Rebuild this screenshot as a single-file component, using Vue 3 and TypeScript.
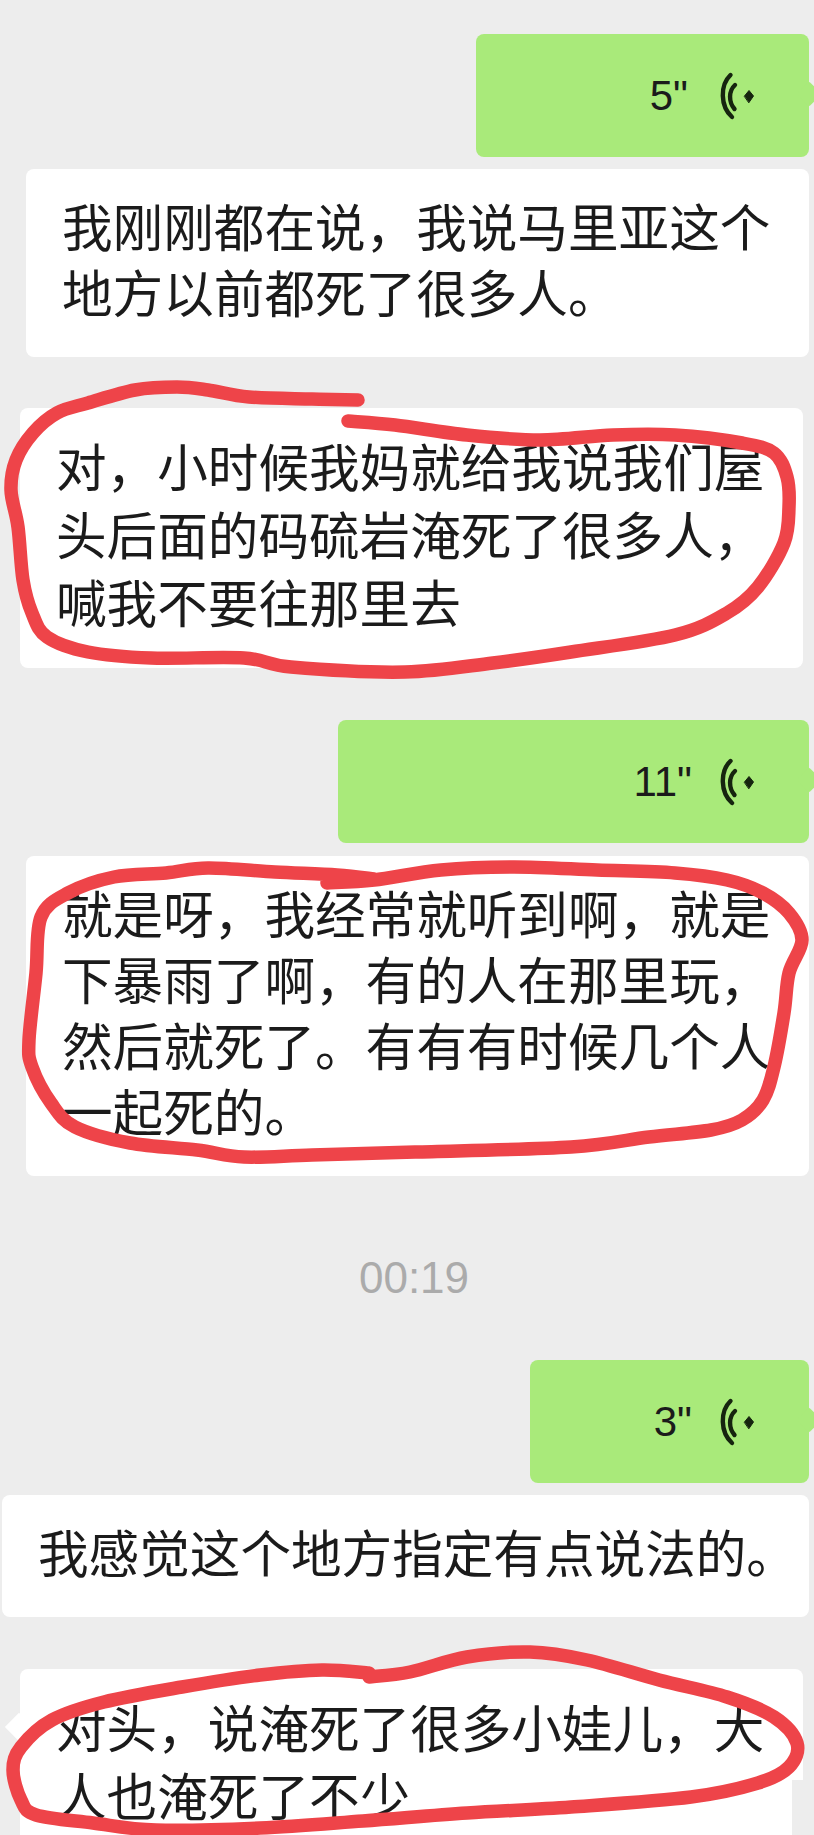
<template>
  <div class="page">
    <template v-for="(msg, i) in messages" :key="i">
      <div v-if="msg.kind === 'time'" class="time">{{ msg.text }}</div>

      <div v-else-if="msg.kind === 'voice'" class="voice" :style="{ width: msg.width + 'px' }">
        <span class="voice-len" :style="{ marginRight: msg.gap + 'px' }">{{ msg.text }}</span>
        <svg class="voice-icon" viewBox="0 0 33 46" width="33" height="46">
          <path d="M9.5 2C-1 12 -1 33 11 44" />
          <path d="M14 12C7.5 18 7.5 29 13.5 36" />
          <path class="voice-dot" d="M23.5 23 28 17.5 32.5 23 28 29.5Z" />
        </svg>
        <span class="voice-tail"></span>
      </div>

      <div
        v-else
        class="text"
        :class="{ 'text--last': msg.last }"
        :style="{ marginLeft: msg.left + 'px', marginRight: msg.right + 'px', paddingLeft: msg.pad + 'px', lineHeight: msg.lh + 'px', marginTop: msg.gap + 'px' }"
      >{{ msg.text }}</div>
    </template>

    <!-- 红笔圈注 -->
    <svg class="marks" viewBox="0 0 814 1835" width="814" height="1835">
      <path v-for="(d, i) in markPaths" :key="i" :d="d" />
    </svg>
  </div>
</template>

<script setup lang="ts">
interface Message {
  kind: 'voice' | 'text' | 'time'
  text: string
  width?: number
  left?: number
  right?: number
  pad?: number
  lh?: number
  gap?: number
  last?: boolean
}

type Point = [number, number]

const messages: Message[] = [
  { kind: 'voice', text: '5"', width: 333, gap: 33 },
  { kind: 'text', text: '我刚刚都在说，我说马里亚这个\n地方以前都死了很多人。', left: 26, right: 5, pad: 36, lh: 66, gap: 12 },
  { kind: 'text', text: '对，小时候我妈就给我说我们屋\n头后面的码硫岩淹死了很多人，\n喊我不要往那里去', left: 20, right: 11, pad: 36, lh: 68, gap: 51 },
  { kind: 'voice', text: '11"', width: 471, gap: 29 },
  { kind: 'text', text: '就是呀，我经常就听到啊，就是\n下暴雨了啊，有的人在那里玩，\n然后就死了。有有有时候几个人\n一起死的。', left: 26, right: 5, pad: 36, lh: 66, gap: 13 },
  { kind: 'time', text: '00:19' },
  { kind: 'voice', text: '3"', width: 279, gap: 29 },
  { kind: 'text', text: '我感觉这个地方指定有点说法的。', left: 2, right: 5, pad: 36, lh: 66, gap: 12 },
  { kind: 'text', text: '对头，说淹死了很多小娃儿，大\n人也淹死了不少', left: 20, right: 11, pad: 36, lh: 68, gap: 52, last: true }
]

const marks: Point[][] = [
  [[358,400],[312,399],[249,397],[208,390],[177,387],[135,390],[88,403],[57,413],[33,433],[16,460],[11,490],[18,527],[23,580],[32,613],[47,637],[88,652],[151,658],[244,658],[291,667],[405,672],[493,663],[571,652],[675,635],[727,613],[758,587],[784,543],[789,507],[787,477],[774,453],[742,443],[675,435],[613,435],[540,440],[467,435],[395,425],[348,421]],
  [[327,883],[374,880],[441,870],[514,867],[597,870],[675,873],[727,880],[763,893],[789,913],[802,940],[789,973],[784,1013],[774,1067],[763,1100],[742,1120],[711,1130],[649,1137],[571,1147],[415,1152],[312,1155],[244,1157],[197,1150],[130,1143],[75,1127],[51,1103],[32,1067],[29,1040],[36,973],[41,917],[68,893],[114,877],[166,873],[208,868],[275,872],[337,875],[374,879]],
  [[369,1677],[410,1672],[467,1657],[530,1652],[587,1660],[659,1680],[727,1697],[774,1717],[797,1743],[789,1767],[758,1783],[691,1797],[571,1807],[467,1813],[363,1821],[260,1828],[156,1830],[93,1823],[36,1815],[21,1800],[13,1770],[21,1747],[52,1720],[104,1702],[182,1687],[260,1675],[322,1670],[369,1673]]
]

// 点列转平滑曲线
function toPath(pts: Point[]): string {
  let d = `M${pts[0][0]} ${pts[0][1]}`
  for (let i = 0; i < pts.length - 1; i++) {
    const p0 = pts[Math.max(i - 1, 0)]
    const p1 = pts[i]
    const p2 = pts[i + 1]
    const p3 = pts[Math.min(i + 2, pts.length - 1)]
    const c1x = p1[0] + (p2[0] - p0[0]) / 6
    const c1y = p1[1] + (p2[1] - p0[1]) / 6
    const c2x = p2[0] - (p3[0] - p1[0]) / 6
    const c2y = p2[1] - (p3[1] - p1[1]) / 6
    d += `C${c1x.toFixed(1)} ${c1y.toFixed(1)} ${c2x.toFixed(1)} ${c2y.toFixed(1)} ${p2[0]} ${p2[1]}`
  }
  return d
}

const markPaths = marks.map(toPath)
</script>

<style scoped>
.page {
  position: relative;
  display: flex;
  flex-direction: column;
  width: 814px;
  height: 1835px;
  padding-top: 34px;
  box-sizing: border-box;
  overflow: hidden;
  background: #ededed;
  font-family: "Liberation Sans", "Noto Sans CJK SC", sans-serif;
  color: #1b1b1b;
}

.voice {
  position: relative;
  flex: none;
  display: flex;
  align-items: center;
  justify-content: flex-end;
  box-sizing: border-box;
  height: 123px;
  margin-left: auto;
  margin-right: 5px;
  padding-right: 55px;
  border-radius: 8px;
  background: #a9ea7a;
}

.text + .voice {
  margin-top: 52px;
}

.time + .voice {
  margin-top: 0;
}

.voice-len {
  font-size: 42px;
  line-height: 46px;
}

.voice-icon {
  display: block;
  overflow: visible;
  fill: none;
  stroke: #16250f;
  stroke-width: 4.4;
  stroke-linecap: round;
}

.voice-dot {
  fill: #16250f;
  stroke-width: 1;
  stroke-linejoin: round;
}

.voice-tail {
  position: absolute;
  right: -9px;
  top: 50%;
  width: 18px;
  height: 18px;
  margin-top: -11px;
  background: #a9ea7a;
  border-radius: 2px;
  transform: rotate(45deg);
}

.text {
  flex: none;
  padding-top: 28px;
  padding-bottom: 28px;
  border-radius: 8px;
  background: #fff;
  font-size: 50.6px;
  white-space: pre;
  color: #1b1b1b;
}

/* 最后一条被截图截断，右下角露出底色，左侧带气泡尖角 */
.text--last {
  position: relative;
  flex: 1;
  border-radius: 8px 8px 0 0;
}

.text--last::before {
  content: "";
  position: absolute;
  left: -11px;
  top: 48px;
  width: 20px;
  height: 20px;
  background: #fff;
  transform: rotate(45deg);
}

.text--last::after {
  content: "";
  position: absolute;
  right: 0;
  top: 111px;
  bottom: 0;
  width: 11px;
  background: #ededed;
}

.time {
  flex: none;
  height: 184px;
  padding-top: 75px;
  padding-left: 14px;
  box-sizing: border-box;
  text-align: center;
  font-size: 44px;
  line-height: 54px;
  color: #ababab;
}

.marks {
  position: absolute;
  left: 0;
  top: 0;
  fill: none;
  stroke: #ee4449;
  stroke-width: 13.5;
  stroke-linecap: round;
  stroke-linejoin: round;
}
</style>
